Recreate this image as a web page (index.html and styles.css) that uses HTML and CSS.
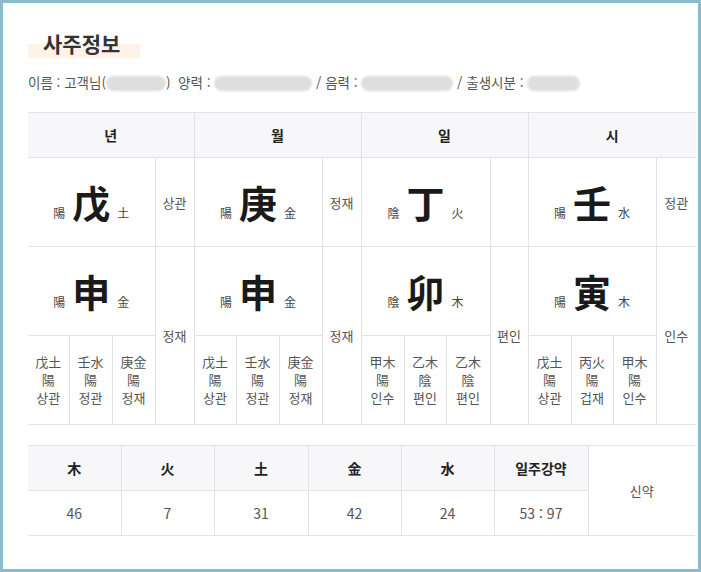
FILE: index.html
```html
<!DOCTYPE html>
<html lang="ko">
<head>
<meta charset="utf-8">
<title>사주정보</title>
<link rel="stylesheet" href="styles.css">
</head>
<body>
<div class="page">
  <h2 class="title"><span class="title-text">사주정보</span></h2>
  <p class="info">이름 : 고객님(<span class="blob b1"></span>) &nbsp;양력 : <span class="blob b2"></span> / 음력 : <span class="blob b3"></span> / 출생시분 : <span class="blob b4"></span></p>

  <table class="saju">
    <colgroup>
      <col class="w41"><col class="w43"><col class="w43"><col class="w39">
      <col class="w42"><col class="w43"><col class="w43"><col class="w39">
      <col class="w43"><col class="w42"><col class="w44"><col class="w38">
      <col class="w43"><col class="w42"><col class="w43"><col class="w40">
    </colgroup>
    <thead>
      <tr class="head">
        <th colspan="4">년</th><th colspan="4">월</th><th colspan="4">일</th><th colspan="4">시</th>
      </tr>
    </thead>
    <tbody>
      <tr class="big">
        <td colspan="3" class="main"><span class="yy">陽</span><span class="char">戊</span><span class="el">土</span></td>
        <td class="side">상관</td>
        <td colspan="3" class="main"><span class="yy">陽</span><span class="char">庚</span><span class="el">金</span></td>
        <td class="side">정재</td>
        <td colspan="3" class="main"><span class="yy">陰</span><span class="char">丁</span><span class="el">火</span></td>
        <td class="side"></td>
        <td colspan="3" class="main"><span class="yy">陽</span><span class="char">壬</span><span class="el">水</span></td>
        <td class="side">정관</td>
      </tr>
      <tr class="big">
        <td colspan="3" class="main"><span class="yy">陽</span><span class="char">申</span><span class="el">金</span></td>
        <td rowspan="2" class="side">정재</td>
        <td colspan="3" class="main"><span class="yy">陽</span><span class="char">申</span><span class="el">金</span></td>
        <td rowspan="2" class="side">정재</td>
        <td colspan="3" class="main"><span class="yy">陰</span><span class="char">卯</span><span class="el">木</span></td>
        <td rowspan="2" class="side">편인</td>
        <td colspan="3" class="main"><span class="yy">陽</span><span class="char">寅</span><span class="el">木</span></td>
        <td rowspan="2" class="side">인수</td>
      </tr>
      <tr class="hidden">
        <td class="sub">戊土<br>陽<br>상관</td>
        <td class="sub">壬水<br>陽<br>정관</td>
        <td class="sub">庚金<br>陽<br>정재</td>
        <td class="sub">戊土<br>陽<br>상관</td>
        <td class="sub">壬水<br>陽<br>정관</td>
        <td class="sub">庚金<br>陽<br>정재</td>
        <td class="sub">甲木<br>陽<br>인수</td>
        <td class="sub">乙木<br>陰<br>편인</td>
        <td class="sub">乙木<br>陰<br>편인</td>
        <td class="sub">戊土<br>陽<br>상관</td>
        <td class="sub">丙火<br>陽<br>겁재</td>
        <td class="sub">甲木<br>陽<br>인수</td>
      </tr>
    </tbody>
  </table>

  <table class="ohaeng">
    <colgroup>
      <col class="w93"><col class="w93"><col class="w94"><col class="w93"><col class="w93"><col class="w94"><col class="w107">
    </colgroup>
    <tr class="head">
      <th>木</th><th>火</th><th>土</th><th>金</th><th>水</th><th>일주강약</th>
      <td rowspan="2" class="result">신약</td>
    </tr>
    <tr class="vals">
      <td>46</td><td>7</td><td>31</td><td>42</td><td>24</td><td>53 : 97</td>
    </tr>
  </table>
</div>
</body>
</html>
```

FILE: styles.css
```css
html, body {
  margin: 0;
  padding: 0;
  background: #ffffff;
}

body {
  font-family: "Noto Sans CJK KR", "Noto Sans", sans-serif;
  color: #444;
}

.page {
  box-sizing: border-box;
  width: 701px;
  height: 572px;
  border: 3px solid #87bbcd;
  padding: 25px 0 0 25px;
  overflow: hidden;
}

.title {
  margin: 0;
  height: 30px;
  line-height: 30px;
  font-size: 21px;
  font-weight: 700;
  color: #333;
}

.title-text {
  display: inline-block;
  padding: 0 20px 0 15px;
  background: linear-gradient(to bottom, transparent 0, transparent 16px, #fff2e8 16px, #fff2e8 30px);
}

.info {
  margin: 14px 0 0 0;
  height: 20px;
  line-height: 20px;
  font-size: 13.5px;
  color: #555;
  white-space: nowrap;
}

.blob {
  display: inline-block;
  height: 15px;
  border-radius: 8px;
  background: #dedede;
  vertical-align: -3px;
  filter: blur(1px);
}

.b1 { width: 60px; }
.b2 { width: 98px; }
.b3 { width: 92px; }
.b4 { width: 53px; }

table {
  border-collapse: collapse;
  table-layout: fixed;
  width: 667px;
  border-top: 1px solid #e3e3e3;
  border-bottom: 1px solid #e3e3e3;
  border-left: 1px hidden;
  border-right: 1px hidden;
}

th, td {
  border: 1px solid #e3e3e3;
  padding: 0;
  text-align: center;
  vertical-align: middle;
}

.w38 { width: 38px; }
.w39 { width: 39px; }
.w40 { width: 40px; }
.w41 { width: 41px; }
.w42 { width: 42px; }
.w43 { width: 43px; }
.w44 { width: 44px; }
.w93 { width: 93px; }
.w94 { width: 94px; }
.w107 { width: 107px; }

.saju {
  margin-top: 20px;
}

.head th {
  height: 44px;
  background: #f7f7f9;
  font-size: 14px;
  font-weight: 700;
  color: #222;
}

.big td {
  height: 88px;
}

.main {
  white-space: nowrap;
}

.yy, .el {
  font-size: 12px;
  color: #444;
  margin: 0 4px;
}

.char {
  font-size: 38px;
  font-weight: 700;
  color: #1a1a1a;
  line-height: 40px;
  margin: 0 3px;
}

.side {
  font-size: 13px;
  color: #555;
}

.hidden td {
  height: 88px;
}

.sub {
  font-size: 13px;
  line-height: 18px;
  color: #555;
}

.ohaeng {
  margin-top: 20px;
}

.ohaeng .head th {
  height: 44px;
}

.vals td {
  height: 44px;
  font-size: 14px;
  color: #555;
}

.result {
  font-size: 13px;
  color: #555;
  background: #fff;
}
```
